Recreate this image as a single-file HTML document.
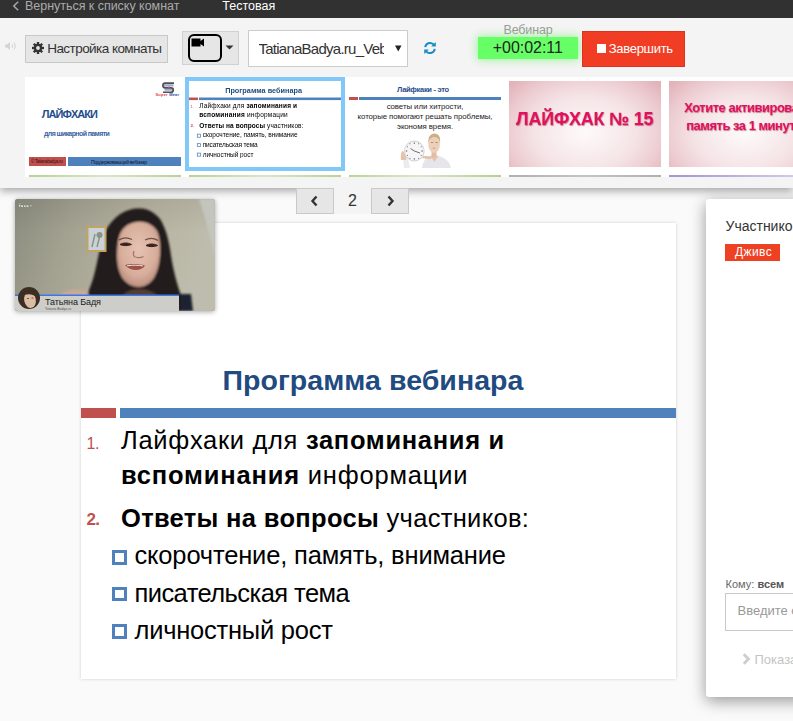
<!DOCTYPE html>
<html><head><meta charset="utf-8">
<style>
*{box-sizing:border-box}
html,body{margin:0;padding:0}
body{width:793px;height:721px;overflow:hidden;position:relative;background:#fafafa;font-family:"Liberation Sans",sans-serif;color:#333}
.a{position:absolute}
#topbar{left:0;top:0;width:793px;height:18px;background:#313131}
#toolbar{left:0;top:18px;width:793px;height:170px;background:#f4f4f4;box-shadow:0 3px 8px rgba(0,0,0,.34)}
.btn{background:#e6e6e6;border:1px solid #c8c8c8}
.txt{white-space:nowrap;line-height:1}
</style></head>
<body>
<div id="toolbar" class="a"></div>
<div id="topbar" class="a">
  <svg class="a" style="left:11px;top:1px" width="9" height="10" viewBox="0 0 9 10"><path d="M7.2 0.8 L2.8 5 L7.2 9.2" fill="none" stroke="#a8a8a8" stroke-width="1.5"/></svg>
  <div class="a txt" style="left:25px;top:-0.1px;font-size:12.5px;letter-spacing:-0.03px;color:#ababab">Вернуться к списку комнат</div>
  <div class="a txt" style="left:222.3px;top:-0.1px;font-size:12.5px;letter-spacing:0px;color:#fff">Тестовая</div>
</div>

<!-- speaker icon -->
<svg class="a" style="left:4px;top:41px" width="13" height="10" viewBox="0 0 13 10"><path d="M1 3.5h2l3-2.5v8l-3-2.5h-2z" fill="#d4d4d4"/><path d="M8 3c.8.8.8 3.2 0 4M10 1.5c1.6 1.6 1.6 5.4 0 7" fill="none" stroke="#d4d4d4" stroke-width="1"/></svg>

<!-- settings button -->
<div class="a btn" style="left:25px;top:35px;width:143px;height:28px"></div>
<svg class="a" style="left:32px;top:42px" width="12" height="12" viewBox="0 0 12 12"><g fill="#333"><circle cx="6" cy="6" r="4.2"/><rect x="4.8" y="0" width="2.4" height="12"/><rect x="0" y="4.8" width="12" height="2.4"/><rect x="4.8" y="0" width="2.4" height="12" transform="rotate(45 6 6)"/><rect x="4.8" y="0" width="2.4" height="12" transform="rotate(-45 6 6)"/></g><circle cx="6" cy="6" r="1.9" fill="#e6e6e6"/></svg>
<div class="a txt" style="left:47.2px;top:41.8px;font-size:13.5px;letter-spacing:-0.55px;color:#333">Настройка комнаты</div>

<!-- camera button -->
<div class="a btn" style="left:182px;top:31px;width:57px;height:34px;border-color:#d0d0d0"></div>
<div class="a" style="left:188px;top:34px;width:34px;height:28px;border:2.2px solid #000;border-radius:6px"></div>
<svg class="a" style="left:191px;top:38px" width="14" height="9" viewBox="0 0 14 9"><path d="M0.5 0.5h9v2.5l3.5-2.5v8l-3.5-2.5v2.5h-9z" fill="#000"/></svg>
<svg class="a" style="left:225px;top:45px" width="9" height="5" viewBox="0 0 9 5"><path d="M0.5 0.5h8l-4 4z" fill="#333"/></svg>

<!-- select -->
<div class="a" style="left:248px;top:30px;width:160px;height:37px;background:#fff;border:1px solid #ccc;overflow:hidden">
  <div class="a" style="left:9.5px;top:8.3px;font-size:15px;line-height:19px;letter-spacing:-0.75px;white-space:nowrap;color:#333;width:125px;height:20px;overflow:hidden">TatianaBadya.ru_Vebinar</div>
</div>
<svg class="a" style="left:395px;top:45px" width="7" height="7" viewBox="0 0 7 7"><path d="M0 0.5h6.5l-3.25 6z" fill="#222"/></svg>

<!-- refresh -->
<svg class="a" style="left:423px;top:41px" width="14" height="14" viewBox="0 0 14 14"><g fill="none" stroke="#1a8dc6" stroke-width="2"><path d="M2.2 6.2A5 5 0 0 1 11.2 4"/><path d="M11.8 7.8A5 5 0 0 1 2.8 10"/></g><path d="M12.8 1v4.6h-4.6z M1.2 13v-4.6h4.6z" fill="#1a8dc6"/></svg>

<!-- webinar timer -->
<div class="a txt" style="left:503.5px;top:24px;font-size:12.5px;letter-spacing:-0.15px;color:#999">Вебинар</div>
<div class="a" style="left:478px;top:37px;width:100px;height:22px;background:#66ff66;box-shadow:0 0 8px 1px rgba(90,240,90,.55)"></div>
<div class="a txt" style="left:492.8px;top:39.9px;font-size:16px;letter-spacing:-0.05px;color:#222">+00:02:11</div>

<!-- end button -->
<div class="a" style="left:582px;top:31px;width:103px;height:36px;background:#f03d24;border:1px solid #d9341d"></div>
<div class="a" style="left:597px;top:44px;width:8.5px;height:8.5px;background:#fff"></div>
<div class="a txt" style="left:608.8px;top:41.7px;font-size:13px;letter-spacing:-0.3px;color:#fff">Завершить</div>


<!-- thumbnails -->
<div class="a" style="left:25px;top:77px;width:160px;height:100px;background:#fff"></div>
<div class="a" style="left:185px;top:77px;width:160px;height:100px;background:#fff"></div>
<div class="a" style="left:345px;top:77px;width:160px;height:100px;background:#fff"></div>
<div class="a" style="left:505px;top:77px;width:160px;height:100px;background:#fff"></div>
<div class="a" style="left:665px;top:77px;width:160px;height:100px;background:#fff"></div>
<div class="a" style="left:29px;top:175px;width:152px;height:2px;background:linear-gradient(90deg,#bad296,#d8e6c6 50%,#bad296)"></div>
<div class="a" style="left:189px;top:175px;width:152px;height:2px;background:linear-gradient(90deg,#bad296,#d8e6c6 50%,#bad296)"></div>
<div class="a" style="left:349px;top:175px;width:152px;height:2px;background:linear-gradient(90deg,#bcd398,#dae7c9 45%,#b6cf90)"></div>
<div class="a" style="left:509px;top:175px;width:152px;height:2px;background:linear-gradient(90deg,#b0b0b0,#c4c4c4 50%,#b0b0b0)"></div>
<div class="a" style="left:669px;top:175px;width:152px;height:2px;background:linear-gradient(90deg,#a494d0,#dcd4ee)"></div>

<!-- thumb 1 -->
<div class="a" style="left:29px;top:81px;width:152px;height:90px;overflow:hidden;background:#fff">
  <svg class="a" style="left:131.5px;top:0.5px" width="15" height="11" viewBox="0 0 15 11"><path d="M3 2.2h9.5v2.2H3zM3.5 6.6h9v2.2h-9z" fill="#98acd4"/><path d="M13 1.2H4.2a2.3 2.3 0 0 0 0 4.6h5.8a2.3 2.3 0 0 1 0 4.6H2" fill="none" stroke="#505050" stroke-width="1.7"/><circle cx="8" cy="5.5" r="1.1" fill="#e04040"/></svg>
  <div class="a txt" style="left:126.5px;top:11.6px;font-size:4px;font-weight:bold;letter-spacing:0.2px;color:#e04040">Super <span style="color:#2050a0">Mear</span></div>
  <div class="a txt" style="left:12.8px;top:28px;font-size:11px;font-weight:bold;letter-spacing:-0.95px;color:#1f4e8c">ЛАЙФХАКИ</div>
  <div class="a txt" style="left:15px;top:49px;font-size:7px;font-weight:bold;letter-spacing:-0.6px;color:#3a62a0">для шикарной памяти</div>
  <div class="a" style="left:0;top:76px;width:37px;height:9px;background:#c0504d"></div>
  <div class="a txt" style="left:2px;top:78.8px;font-size:4.5px;letter-spacing:-0.3px;color:#3a1010">© Tatianabadya.ru</div>
  <div class="a" style="left:39px;top:76px;width:113px;height:9px;background:#4f81bd"></div>
  <div class="a txt" style="left:62px;top:78.6px;font-size:5px;letter-spacing:-0.35px;color:#101c30">Поддерживающий вебинар</div>
</div>

<!-- thumb 2 (active) -->
<div class="a" style="left:185px;top:77px;width:160px;height:94px;border:4px solid #80c8f8;background:#fff;overflow:hidden">
  <div class="a" style="left:0;top:-31.4px;width:595px;height:457px;transform:scale(0.2555);transform-origin:0 0">
  <div class="a txt" style="left:141.5px;top:144.4px;font-size:28.5px;font-weight:bold;letter-spacing:0.05px;color:#1f4b80">Программа вебинара</div>
  <div class="a" style="left:0;top:185.5px;width:35px;height:10.5px;background:#c0504d"></div>
  <div class="a" style="left:38.7px;top:185.5px;width:556.3px;height:10.5px;background:#4f81bd"></div>
  <div class="a txt" style="left:5.5px;top:213.7px;font-size:16px;letter-spacing:-0.4px;color:#c0504d">1.</div>
  <div class="a txt" style="left:40px;top:205.6px;font-size:25.5px;letter-spacing:0.69px;color:#000">Лайфхаки для <b>запоминания и</b></div>
  <div class="a txt" style="left:40px;top:240.9px;font-size:25.5px;letter-spacing:0.81px;color:#000"><b>вспоминания</b> информации</div>
  <div class="a txt" style="left:5.5px;top:289.4px;font-size:17px;font-weight:bold;letter-spacing:-0.6px;color:#c0504d">2.</div>
  <div class="a txt" style="left:40px;top:283.6px;font-size:25.5px;letter-spacing:0.32px;color:#000"><b>Ответы на вопросы</b> участников:</div>
  <div class="a" style="left:31.3px;top:328.1px;width:14.6px;height:14.6px;border:3.4px solid #4f81bd"></div>
  <div class="a" style="left:31.3px;top:364.8px;width:14.6px;height:14.6px;border:3.4px solid #4f81bd"></div>
  <div class="a" style="left:31.3px;top:402px;width:14.6px;height:14.6px;border:3.4px solid #4f81bd"></div>
  <div class="a txt" style="left:53.5px;top:321.4px;font-size:25.5px;letter-spacing:-0.17px;color:#000">скорочтение, память, внимание</div>
  <div class="a txt" style="left:53.5px;top:358.6px;font-size:25.5px;letter-spacing:-0.56px;color:#000">писательская тема</div>
  <div class="a txt" style="left:53.5px;top:396.4px;font-size:25.5px;letter-spacing:-0.23px;color:#000">личностный рост</div>
</div>
</div>

<!-- thumb 3 -->
<div class="a" style="left:349px;top:81px;width:152px;height:90px;overflow:hidden;background:#fff">
  <div class="a txt" style="left:48px;top:5px;font-size:7.5px;font-weight:bold;letter-spacing:-0.3px;color:#1f4e8c">Лайфкаки - это</div>
  <div class="a" style="left:0;top:16px;width:9px;height:2.7px;background:#c0504d"></div>
  <div class="a" style="left:10px;top:16px;width:142px;height:2.7px;background:#4f81bd"></div>
  <div class="a txt" style="left:0;width:152px;text-align:center;top:20.5px;font-size:7.8px;line-height:10px;letter-spacing:-0.05px;color:#222">советы или хитрости,<br>которые помогают решать проблемы,<br>экономя время.</div>
  <svg class="a" style="left:47px;top:51px" width="56" height="36" viewBox="0 0 56 36">
    <defs><filter id="bl1" x="-20%" y="-20%" width="140%" height="140%"><feGaussianBlur stdDeviation="0.45"/></filter></defs>
    <g filter="url(#bl1)">
    <path d="M26 36 C27 28 31 24 37 23.5 C44 23.5 53 26 55 36z" fill="#e6e6ea"/>
    <path d="M34 23.8 L38.5 30 L42.5 23.8z" fill="#e8c4ac"/>
    <rect x="35.5" y="19" width="5" height="6" fill="#e2bca4"/>
    <ellipse cx="38.1" cy="12.8" rx="5.7" ry="8.2" fill="#ecd0b8"/>
    <path d="M32.3 12 C31.8 5 34.5 1.6 38.5 1.6 C42.5 1.6 45 5 44 12 C43.5 7 41 5 38.2 5 C35.5 5 33 7 32.3 12z" fill="#cfae82"/>
    <path d="M35 10.5h2.2M39.5 10.5h2.2" stroke="#8a7060" stroke-width="0.7"/>
    <path d="M36.8 16.2h2.6" stroke="#c88a80" stroke-width="0.8"/>
    <path d="M8 36 L7 26 L12 26 L14 36z" fill="#ececf0"/>
    <path d="M5 28 C4.5 24 5 20 6.5 19 C8 19.5 9 22 10.3 25 L10 28z" fill="#e6c2a8"/>
    <circle cx="18.3" cy="19" r="10.4" fill="#d6d6d6"/>
    <circle cx="18.3" cy="19" r="9.3" fill="#f6f6f6"/>
    <g fill="#555"><rect x="17.8" y="10.5" width="1" height="1.4"/><rect x="17.8" y="26.2" width="1" height="1.4"/><rect x="9.8" y="18.5" width="1.4" height="1"/><rect x="25.4" y="18.5" width="1.4" height="1"/><circle cx="22.6" cy="11.8" r="0.5"/><circle cx="25.2" cy="14.8" r="0.5"/><circle cx="25.2" cy="23.2" r="0.5"/><circle cx="22.6" cy="26.2" r="0.5"/><circle cx="14" cy="26.2" r="0.5"/><circle cx="11.4" cy="23.2" r="0.5"/><circle cx="11.4" cy="14.8" r="0.5"/><circle cx="14" cy="11.8" r="0.5"/></g>
    <path d="M18.3 19 L14.5 16.5 M18.3 19 L24 21" stroke="#333" stroke-width="0.7"/>
    <path d="M26.5 24.5 C29 23.8 33 24 36 25 L35 27.2 C32 27 29 26.8 26.5 26.3z" fill="#e6c2a8"/>
    </g>
  </svg>
</div>

<!-- thumb 4 -->
<div class="a" style="left:509px;top:81px;width:152px;height:86px;overflow:hidden;background:radial-gradient(ellipse 66% 85% at 50% 60%,#fefafa 0%,#f5e4e6 50%,#eccbd0 78%,#e2b1b9 100%)">
  <div class="a txt" style="left:7px;top:28.5px;font-size:18px;font-weight:bold;letter-spacing:-0.22px;color:#e0115f;text-shadow:0.5px 0.8px 1px rgba(120,0,40,.45)">ЛАЙФХАК № 15</div>
</div>

<!-- thumb 5 -->
<div class="a" style="left:669px;top:81px;width:152px;height:86px;overflow:hidden;background:radial-gradient(ellipse 66% 85% at 50% 60%,#fefafa 0%,#f5e4e6 50%,#eccbd0 78%,#e2b1b9 100%)">
  <div class="a txt" style="left:3px;width:152px;text-align:center;top:18px;font-size:13px;line-height:17.5px;font-weight:bold;letter-spacing:-0.5px;color:#e0115f;text-shadow:0.5px 0.8px 1px rgba(120,0,40,.45)">Хотите активировать<br>память за 1 минуту?</div>
</div>

<!-- main slide -->
<div class="a" style="left:81px;top:223px;width:595px;height:456px;background:#fff;box-shadow:0 0 3px rgba(0,0,0,.18)"><div class="a" style="left:0;top:-1px;width:595px;height:457px">
  <div class="a txt" style="left:141.5px;top:144.4px;font-size:28.5px;font-weight:bold;letter-spacing:0.05px;color:#1f4b80">Программа вебинара</div>
  <div class="a" style="left:0;top:185.5px;width:35px;height:10.5px;background:#c0504d"></div>
  <div class="a" style="left:38.7px;top:185.5px;width:556.3px;height:10.5px;background:#4f81bd"></div>
  <div class="a txt" style="left:5.5px;top:213.7px;font-size:16px;letter-spacing:-0.4px;color:#c0504d">1.</div>
  <div class="a txt" style="left:40px;top:205.6px;font-size:25.5px;letter-spacing:0.69px;color:#000">Лайфхаки для <b>запоминания и</b></div>
  <div class="a txt" style="left:40px;top:240.9px;font-size:25.5px;letter-spacing:0.81px;color:#000"><b>вспоминания</b> информации</div>
  <div class="a txt" style="left:5.5px;top:289.4px;font-size:17px;font-weight:bold;letter-spacing:-0.6px;color:#c0504d">2.</div>
  <div class="a txt" style="left:40px;top:283.6px;font-size:25.5px;letter-spacing:0.32px;color:#000"><b>Ответы на вопросы</b> участников:</div>
  <div class="a" style="left:31.3px;top:328.1px;width:14.6px;height:14.6px;border:3.4px solid #4f81bd"></div>
  <div class="a" style="left:31.3px;top:364.8px;width:14.6px;height:14.6px;border:3.4px solid #4f81bd"></div>
  <div class="a" style="left:31.3px;top:402px;width:14.6px;height:14.6px;border:3.4px solid #4f81bd"></div>
  <div class="a txt" style="left:53.5px;top:321.4px;font-size:25.5px;letter-spacing:-0.17px;color:#000">скорочтение, память, внимание</div>
  <div class="a txt" style="left:53.5px;top:358.6px;font-size:25.5px;letter-spacing:-0.56px;color:#000">писательская тема</div>
  <div class="a txt" style="left:53.5px;top:396.4px;font-size:25.5px;letter-spacing:-0.23px;color:#000">личностный рост</div>
</div></div>

<!-- pagination -->
<div class="a" style="left:296px;top:188px;width:113px;height:26px;background:#f4f4f4"></div>
<div class="a btn" style="left:296px;top:188px;width:38px;height:26px;border-color:#c9c9c9"></div>
<svg class="a" style="left:310px;top:195px" width="9" height="12" viewBox="0 0 9 12"><path d="M6.5 1.5L2.5 6l4 4.5" fill="none" stroke="#333" stroke-width="2.4"/></svg>
<div class="a txt" style="left:348px;top:193px;font-size:16px;color:#333">2</div>
<div class="a btn" style="left:371px;top:188px;width:38px;height:26px;border-color:#c9c9c9"></div>
<svg class="a" style="left:386px;top:195px" width="9" height="12" viewBox="0 0 9 12"><path d="M2.5 1.5L6.5 6l-4 4.5" fill="none" stroke="#333" stroke-width="2.4"/></svg>

<!-- video -->
<div class="a" style="left:15px;top:199px;width:200px;height:112px;border-radius:3px;overflow:hidden;box-shadow:0 1px 5px rgba(0,0,0,.35);background:#9c9a88">
  <svg class="a" style="left:0;top:0" width="200" height="112" viewBox="0 0 200 112">
    <defs>
      <linearGradient id="wall" x1="0" y1="0" x2="1" y2="0.2"><stop offset="0" stop-color="#8a8c7e"/><stop offset="0.3" stop-color="#a2a190"/><stop offset="0.65" stop-color="#b6b2a0"/><stop offset="1" stop-color="#bebcac"/></linearGradient>
      <linearGradient id="vtop" x1="0" y1="0" x2="0" y2="1"><stop offset="0" stop-color="#000" stop-opacity="0.06"/><stop offset="0.3" stop-color="#000" stop-opacity="0"/></linearGradient>
      <radialGradient id="face" cx="0.5" cy="0.42" r="0.62"><stop offset="0" stop-color="#e6c2b2"/><stop offset="0.65" stop-color="#d8ae9c"/><stop offset="1" stop-color="#b88a7a"/></radialGradient>
      <filter id="vb" x="-10%" y="-10%" width="120%" height="120%"><feGaussianBlur stdDeviation="1.1"/></filter>
      <filter id="vb2"><feGaussianBlur stdDeviation="0.75"/></filter>
    </defs>
    <rect width="200" height="112" fill="url(#wall)"/>
    <rect width="200" height="112" fill="url(#vtop)"/>
    <g filter="url(#vb)">
      <path d="M184 0 C191 20 196 40 200 60 L200 0z" fill="#c4c6be"/>
      <path d="M66 112 C70 100 74 92 78 80 C82 66 84 52 87 42 C90 30 96 22 104 16 C112 10 120 9 126 9.5 C134 10 140 14 145 20 C150 28 153 38 155 50 C157 64 160 80 166 96 L172 112z" fill="#211d1b"/>
      <path d="M104 38 C106 30 112 24 122 23 C132 22 140 27 143 34 C145 40 145.5 48 145 56 C144.5 64 143 72 139 79 C135 85 129 88 124 88 C118 88 112 85 108 80 C104 74 102 66 102 57 C102 50 102.5 43 104 38z" fill="url(#face)"/>
      <path d="M104 100 C110 93 116 90 124 90 C132 90 140 93 146 100 L148 112 L102 112z" fill="#5a4038" opacity="0.9"/>
      <path d="M44 97 C50 91 60 89 72 92 L74 97z" fill="#c8a898"/>
      <path d="M166 95 L176 95 L178 112 L166 112z" fill="#1c2430"/>
    </g>
    <g filter="url(#vb2)">
      <rect x="71.5" y="27" width="20" height="26" fill="#c4a460"/>
      <rect x="73.5" y="29" width="16" height="22" fill="#c8d2d8"/>
      <path d="M77 48 L80 35 M82 48 L85 36" stroke="#8a907c" stroke-width="1.4"/>
      <circle cx="84.5" cy="36" r="3" fill="#8a9482"/>
      <path d="M104 41 C108 38.5 113 38.5 117 40.5 M130 41 C134 39 139 39 143 41.5" stroke="#4a3028" stroke-width="1.3" fill="none" opacity="0.75"/>
      <path d="M105 45.5 C108 43.5 113 43.5 116.5 45.5 C113 47 108 47 105 45.5z M131 46.5 C134 44.5 139 44.5 142.5 46.5 C139 48 134 48 131 46.5z" fill="#3a2420" stroke="#3a2420" stroke-width="1"/>
      <path d="M119 52 C118 55 118 57 120 58 C123 59 126 59 128.5 57.5" stroke="#a87060" stroke-width="1.2" fill="none"/>
      <path d="M110 66 C116 64.5 124 64.5 130 66.5 C127 72.5 115 72.5 110 66z" fill="#9a5248"/>
      <path d="M112 66.8 C118 66 124 66 128 67" stroke="#f0e4dc" stroke-width="1" fill="none"/>
    </g>
    <g fill="#fff" opacity="0.85"><rect x="4" y="6" width="1.2" height="1.5"/><rect x="6" y="6.5" width="2" height="1.3"/><rect x="9" y="6.5" width="1.5" height="1.3"/><rect x="11.5" y="6.5" width="2" height="1.3"/><rect x="15.5" y="6" width="0.8" height="1.3"/><rect x="4.5" y="4.5" width="0.8" height="0.8"/></g>
    <rect x="0" y="95.5" width="164" height="1.6" fill="#3a78e8"/>
    <rect x="0" y="97" width="164" height="15" fill="#cdcdca"/>
    <circle cx="14" cy="99" r="11" fill="#3c2e24"/>
    <g filter="url(#vb2)"><ellipse cx="15" cy="101" rx="5.8" ry="8" fill="#dcbca4" transform="rotate(-12 15 101)"/>
    <path d="M9 96 C10 92 13 90.5 16 91 C19 92 21 94.5 21 98 C18 95 14 94.5 9 96z" fill="#3c2e24"/>
    <path d="M12 99.5h2M16.5 99h2" stroke="#5a4030" stroke-width="0.8"/></g>
    <text x="30" y="105.6" font-family="Liberation Sans" font-size="9" fill="#1a1a1a" letter-spacing="-0.1">Татьяна Бадя</text>
    <text x="30" y="110.8" font-family="Liberation Sans" font-size="3.5" fill="#555">Tatiana Badya.ru</text>
  </svg>
</div>

<!-- participants panel -->
<div class="a" style="left:706px;top:199px;width:120px;height:498px;background:#fff;border-radius:3px;box-shadow:0 4px 16px rgba(0,0,0,.4)">
  <div class="a txt" style="left:19.5px;top:20.4px;font-size:14px;color:#333">Участников</div>
  <div class="a" style="left:19px;top:45px;width:55px;height:16.7px;background:#ee4124"></div>
  <div class="a txt" style="left:29px;top:47.1px;font-size:12px;letter-spacing:0.4px;color:#fff">Дживс</div>
  <div class="a txt" style="left:19.5px;top:379.7px;font-size:11px;letter-spacing:0.02px;color:#666">Кому: <b style="color:#555">всем</b></div>
  <div class="a" style="left:19px;top:393.5px;width:110px;height:38px;border:1px solid #c8c8c8;background:#fff"></div>
  <div class="a txt" style="left:31.5px;top:404.5px;font-size:13px;color:#999">Введите сообщение</div>
  <svg class="a" style="left:35.5px;top:453.5px" width="9" height="12" viewBox="0 0 9 12"><path d="M1.8 1.2L6.5 6 1.8 10.8" fill="none" stroke="#cdcdcd" stroke-width="2.8"/></svg>
  <div class="a txt" style="left:48.5px;top:453.8px;font-size:13px;color:#c4c4c4">Показать</div>
</div>

</body></html>
